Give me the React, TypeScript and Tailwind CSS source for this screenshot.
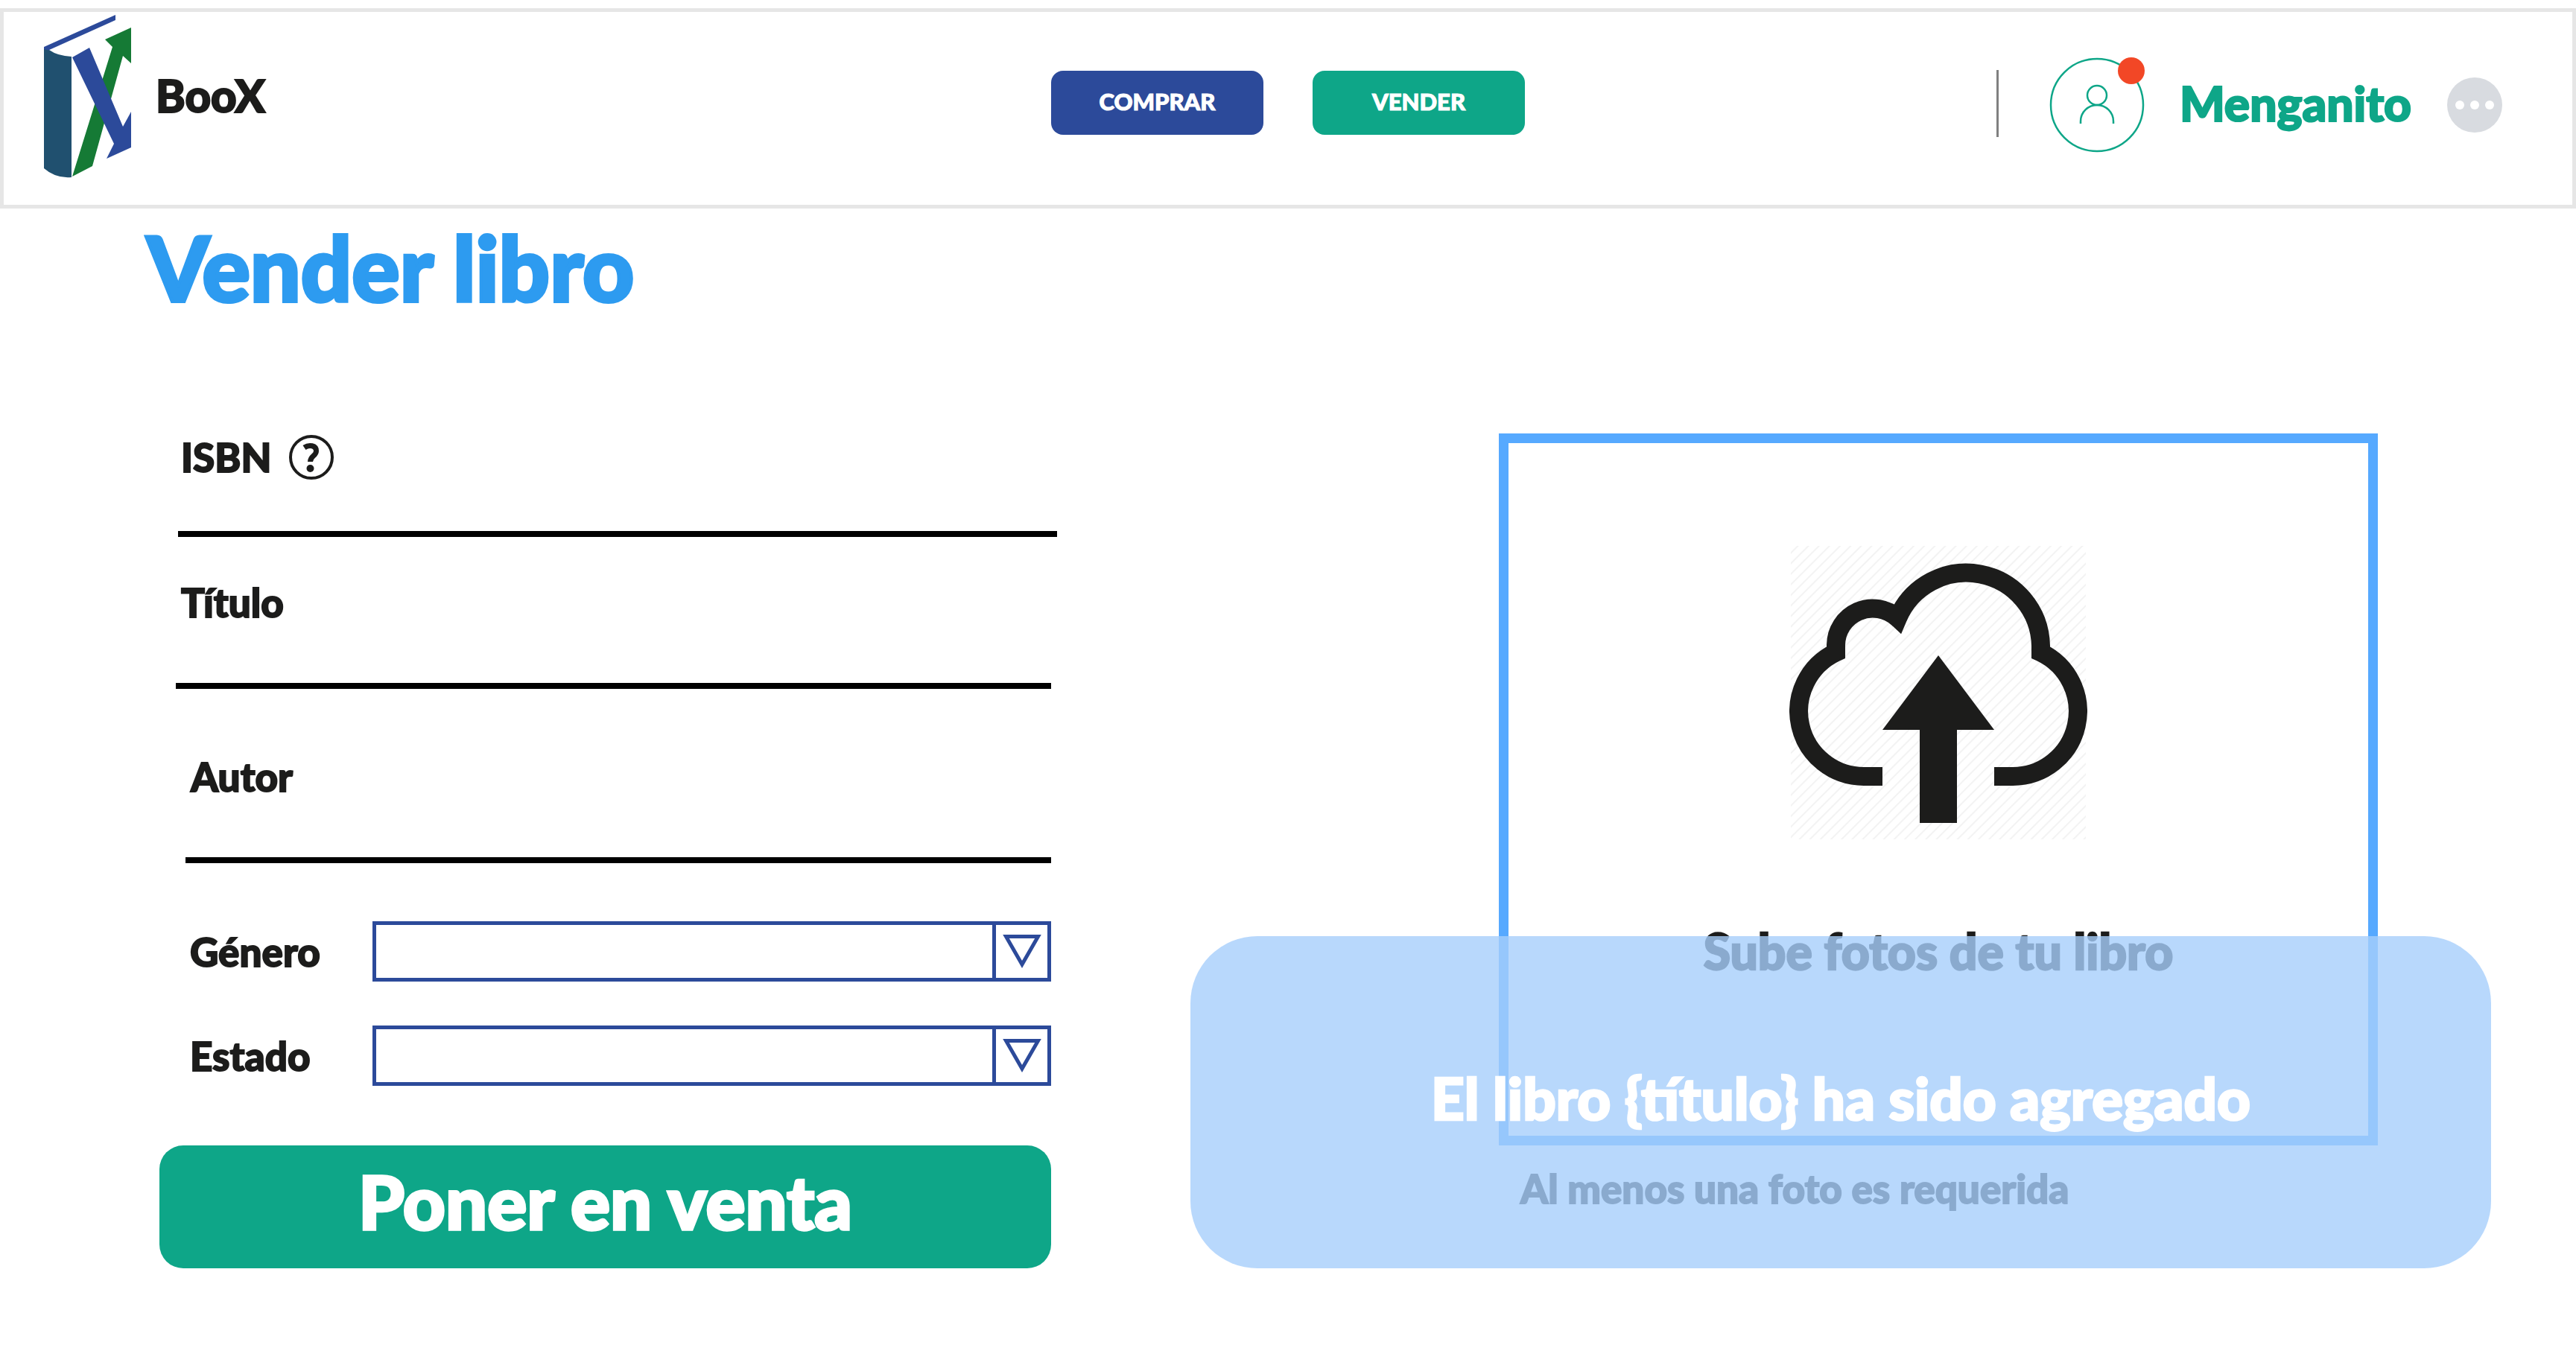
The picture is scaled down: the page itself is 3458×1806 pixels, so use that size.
import type { ReactNode } from "react";

function BookLogo() {
  return (
    <svg viewBox="0 0 118 220" className="h-[220px] w-[118px] shrink-0" aria-hidden="true">
      <path d="M0 44 L7 47 Q18 55 37 56 V218 Q16 220 0 206 Z" fill="#20506f" />
      <path d="M0 43 L96 0 V7 L6 47.500 L0 46 Z" fill="#2c4a9a" />
      <path d="M38 217 L92 43 L82 33 L117 17 V65 L106 55 L65 203 Z" fill="#157a35" />
      <path d="M38 57 L61 44 L106 150 L117 130 V178 L84 193 L94 173 Z" fill="#2c4a9a" />
    </svg>
  );
}

function UserIcon() {
  return (
    <svg viewBox="0 0 128 128" className="size-32" fill="none" stroke="#0ea688" strokeWidth="2.500" aria-hidden="true">
      <circle cx="64" cy="64" r="62" />
      <circle cx="64" cy="51" r="13" />
      <path d="M42 89 V86 A22 22 0 0 1 86 86 V89" />
    </svg>
  );
}

function MoreIcon() {
  return (
    <svg viewBox="0 0 74 74" className="size-[74px]" aria-hidden="true">
      <circle cx="37" cy="37" r="37" fill="#d8dbe0" />
      <g fill="#fff">
        <circle cx="17" cy="37" r="6" />
        <circle cx="37" cy="37" r="6" />
        <circle cx="57" cy="37" r="6" />
      </g>
    </svg>
  );
}

function HelpIcon() {
  return (
    <svg viewBox="0 0 60 60" className="size-[60px]" fill="none" stroke="#1c1c1b" aria-hidden="true">
      <circle cx="30" cy="30" r="28" strokeWidth="4" />
      <path d="M20.500 17 C27 12.500 36.500 14 36.500 21.500 C36.500 28.500 28.500 28 28.500 36" strokeWidth="7" />
      <circle cx="28.500" cy="45" r="5" fill="#1c1c1b" stroke="none" />
    </svg>
  );
}

function UploadIcon() {
  return (
    <svg viewBox="0 0 400 400" className="size-[400px]" aria-hidden="true">
      <defs>
        <pattern id="hatch" width="10" height="10" patternUnits="userSpaceOnUse" patternTransform="rotate(45)">
          <rect width="2" height="10" fill="#f3f3f3" />
        </pattern>
      </defs>
      <rect x="2" y="4" width="396" height="394" fill="url(#hatch)" />
      <path
        d="M125 313.500 H100 A87.500 87.500 0 0 1 62.500 147 V138 A49.500 49.500 0 0 1 145.500 101 A100 100 0 0 1 337.500 138 V147 A87.500 87.500 0 0 1 300 313.500 H275"
        fill="none"
        stroke="#1c1c1b"
        strokeWidth="25"
      />
      <path d="M200 151 L275 251 H225 V376 H175 V251 H125 Z" fill="#1c1c1b" />
    </svg>
  );
}

function Field({ id, label, className, children }: { id: string; label: string; className: string; children?: ReactNode }) {
  return (
    <div className={`flex items-start border-b-8 border-black ${className}`}>
      <label htmlFor={id}>{label}</label>
      {children}
      <input id={id} type="text" className="ml-6 h-16 min-w-0 flex-1 bg-transparent outline-none" />
    </div>
  );
}

function SelectField({ id, label }: { id: string; label: string }) {
  return (
    <div className="ml-[41px] flex items-center">
      <label htmlFor={id} className="w-[245px] shrink-0">
        {label}
      </label>
      <div className="relative flex-1">
        <select id={id} className="block h-[81px] w-full appearance-none border-5 border-[#2c4a9a] bg-white pr-20 pl-4 outline-none">
          <option value=""></option>
        </select>
        <span className="pointer-events-none absolute inset-y-0 right-0 flex w-[79px] items-center justify-center border-5 border-[#2c4a9a]">
          <svg viewBox="0 0 52 46" className="h-[46px] w-[52px]" fill="none" stroke="#2c4a9a" strokeWidth="5" aria-hidden="true">
            <path d="M4.500 2.500 H47.500 L26 40 Z" />
          </svg>
        </span>
      </div>
    </div>
  );
}

export default function App() {
  return (
    <div className="min-h-screen bg-white pt-[11px] font-['Lato',sans-serif] font-black text-[#1c1c1b] [&_:is(h1,p,label,button,header_span,[role=status])]:[-webkit-text-stroke:0.035em_currentColor]">
      <header className="grid h-[269px] grid-cols-[1fr_auto_1fr] border-5 border-[#e6e6e6]">
        <div className="flex items-start pt-1 pl-[54px]">
          <BookLogo />
          <span className="mt-[72px] ml-8 text-[60px] leading-[72px]">BooX</span>
        </div>
        <nav className="flex items-start gap-[66px] pt-[79px] text-[31px] text-white">
          <button type="button" className="h-[86px] w-[285px] rounded-2xl bg-[#2c4a9a] pb-1">
            COMPRAR
          </button>
          <button type="button" className="h-[86px] w-[285px] rounded-2xl bg-[#0ea688] pb-1">
            VENDER
          </button>
        </nav>
        <div className="flex items-center justify-end pr-[94px] pb-[10px]">
          <span className="mb-1 h-[90px] w-[3px] bg-[#808080]" />
          <button type="button" aria-label="Notificaciones" className="relative ml-[68px]">
            <UserIcon />
            <span className="absolute top-0 right-0 size-9 rounded-full bg-[#f24726]" />
          </button>
          <span className="ml-[47px] pb-1 text-[64px] leading-[72px] text-[#0ea688]">Menganito</span>
          <button type="button" aria-label="Más opciones" className="ml-12">
            <MoreIcon />
          </button>
        </div>
      </header>

      <main className="pt-[19px] pr-[114px] pb-[103px] pl-[197px]">
        <h1 className="text-[120px] leading-[120px] text-[#2d9bf0]">Vender libro</h1>

        <div className="mt-[163px] grid grid-cols-[1197fr_1746fr] gap-[187px] pl-[17px]">
          <form className="flex flex-col text-[53px] leading-[64px]">
            <Field id="isbn" label="ISBN" className="-mr-2 ml-[25px] h-[139px] pl-1">
              <button type="button" aria-label="Ayuda sobre el ISBN" className="ml-6 pt-[2px]">
                <HelpIcon />
              </button>
            </Field>
            <Field id="titulo" label="Título" className="ml-[22px] h-[204px] pt-[56px] pl-[7px]" />
            <Field id="autor" label="Autor" className="ml-[35px] h-[234px] pt-[86px] pl-[7px]" />
            <div className="mt-[78px] mb-20 flex flex-col gap-[59px]">
              <SelectField id="genero" label="Género" />
              <SelectField id="estado" label="Estado" />
            </div>
            <button type="submit" className="h-[165px] rounded-[32px] bg-[#0ea688] pb-4 text-[99px] leading-[112px] text-white">
              Poner en venta
            </button>
          </form>

          <section className="relative">
            <button
              type="button"
              className="mr-[152px] ml-[414px] flex h-[956px] w-[calc(100%-566px)] flex-col items-center border-13 border-[#56a9ff] pt-[134px] text-[66px] leading-[80px]"
            >
              <UploadIcon />
              <span className="mt-[108px]">Sube fotos de tu libro</span>
            </button>
            <p className="mt-[26px] ml-[443px] text-[53px] leading-[64px]">Al menos una foto es requerida</p>
            <div
              role="status"
              className="absolute inset-x-0 bottom-0 flex h-[446px] items-center justify-center rounded-[90px] bg-[#a6cefb]/80 pb-3 text-[78px] leading-[88px] text-white"
            >
              El libro {"{título}"} ha sido agregado
            </div>
          </section>
        </div>
      </main>
    </div>
  );
}
